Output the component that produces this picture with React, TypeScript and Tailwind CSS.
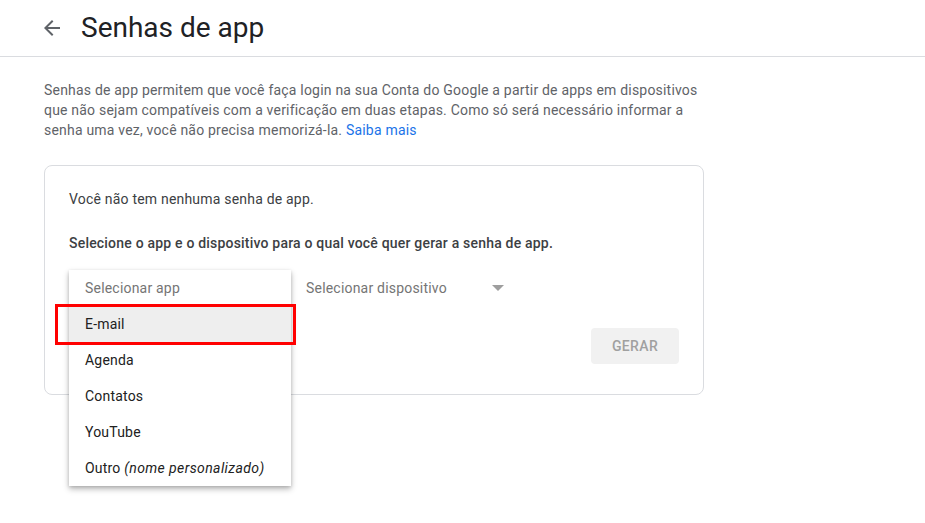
const menuItems = ['E-mail', 'Agenda', 'Contatos', 'YouTube'];

const BackArrow = () => (
  <svg viewBox="0 0 24 24" className="h-6 w-6 fill-[#5f6368]">
    <path d="M20 11H7.83l5.59-5.59L12 4l-8 8 8 8 1.41-1.41L7.83 13H20v-2z" />
  </svg>
);

const AppMenu = () => (
  <div className="absolute top-0 left-0 z-10 w-[222px] bg-white py-0 shadow-[0_3px_6px_rgba(0,0,0,0.28),0_1px_3px_rgba(0,0,0,0.12)]">
    <div className="flex h-9 items-center px-4 text-[#757575]">Selecionar app</div>
    {menuItems.map((item, i) => (
      <div
        key={item}
        className={`flex h-9 items-center px-4 text-[#212121] ${i === 0 ? 'bg-[#eeeeee]' : ''}`}
      >
        {item}
      </div>
    ))}
    <div className="flex h-9 items-center px-4 text-[#212121]">
      Outro&nbsp;<i className="tracking-[0.4px]">(nome personalizado)</i>
    </div>
    {/* destaque vermelho no E-mail */}
    <div className="pointer-events-none absolute top-[34px] left-[-14px] h-[41px] w-[241px] border-[3px] border-[#ff0000]" />
  </div>
);

export default function App() {
  return (
    <div className="min-h-[523px] w-full bg-white font-['Roboto',sans-serif] text-sm tracking-[0.2px]">
      <header className="flex h-[57px] items-center border-b border-[#dadce0] pl-10">
        <BackArrow />
        <h1 className="ml-[17px] text-[28px] leading-8 font-normal tracking-normal text-[#202124]">Senhas de app</h1>
      </header>

      <main className="px-11">
        <p className="mt-[23px] w-[660px] leading-5 text-[#5f6368]">
          Senhas de app permitem que você faça login na sua Conta do Google a partir de apps em dispositivos que
          não sejam compatíveis com a verificação em duas etapas. Como só será necessário informar a senha uma vez,
          você não precisa memorizá-la. <span className="text-[#1a73e8]">Saiba mais</span>
        </p>

        <section className="mt-[25px] w-[660px] rounded-lg border border-[#dadce0] px-6 pt-[23px] pb-[30px]">
          <p className="leading-5 text-[#3c4043]">Você não tem nenhuma senha de app.</p>
          <p className="mt-6 leading-5 font-medium text-[#3c4043]">
            Selecione o app e o dispositivo para o qual você quer gerar a senha de app.
          </p>

          <div className="mt-[17px] flex h-9 items-center">
            <div className="relative h-9 w-[222px]">
              <AppMenu />
            </div>
            <div className="ml-[15px] flex h-9 w-[200px] items-center justify-between text-[#757575]">
              <span>Selecionar dispositivo</span>
              <svg viewBox="0 0 12 6" className="mr-[2px] h-[6px] w-3 fill-[#9e9e9e]">
                <path d="M0 0h12L6 6z" />
              </svg>
            </div>
          </div>

          <div className="mt-[22px] flex justify-end">
            <button className="h-9 w-[88px] rounded bg-[#f1f1f1] font-medium tracking-wide text-[#a0a0a0]">
              GERAR
            </button>
          </div>
        </section>
      </main>
    </div>
  );
}
